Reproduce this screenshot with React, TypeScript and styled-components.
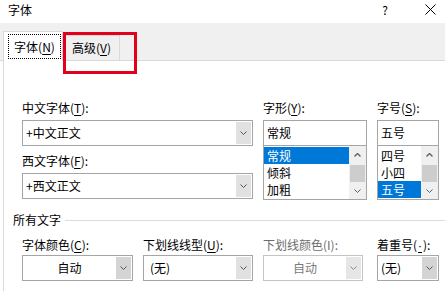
import React from 'react';
import styled, { createGlobalStyle } from 'styled-components';

const GlobalStyle = createGlobalStyle`
  html, body {
    margin: 0;
    padding: 0;
    background: #ffffff;
  }
  body {
    width: 445px;
    height: 291px;
    overflow: hidden;
    font-family: "Noto Sans CJK SC", "Microsoft YaHei UI", sans-serif;
    font-size: 12px;
    color: #000000;
  }
  u {
    text-decoration-thickness: 1px;
    text-underline-offset: 2px;
  }
`;

const Dialog = styled.div`
  width: 445px;
  height: 291px;
  display: flex;
  flex-direction: column;
  background: #ffffff;
  overflow: hidden;
`;

const TitleBar = styled.div`
  height: 23px;
  flex: none;
  box-sizing: border-box;
  padding: 0 0 3px 8px;
  display: flex;
  align-items: center;
`;

const TitleText = styled.div`
  flex: 1;
  line-height: 16px;
`;

const HelpGlyph = styled.div`
  line-height: 16px;
  margin-right: 37px;
`;

const CloseGlyph = styled.svg`
  width: 11px;
  height: 11px;
  margin-right: 9px;
  margin-top: -2px;
`;

const TabStrip = styled.div`
  height: 38px;
  flex: none;
  box-sizing: border-box;
  background: #f0f0f0;
  border-bottom: 1px solid #d9d9d9;
  padding-left: 3px;
  display: flex;
  align-items: flex-end;
`;

const ActiveTab = styled.div`
  width: 60px;
  height: 30px;
  margin-bottom: -1px;
  box-sizing: border-box;
  background: #ffffff;
  border: 1px solid #d9d9d9;
  border-bottom: none;
  position: relative;
  z-index: 1;
  padding: 2px 0 0 4px;
`;

const FocusRing = styled.div`
  width: 53px;
  height: 25px;
  box-sizing: border-box;
  border: 1px dotted #000000;
  display: flex;
  align-items: center;
  justify-content: center;
  line-height: 16px;
`;

const Tab = styled.div`
  width: 57px;
  height: 25px;
  box-sizing: border-box;
  background: #f0f0f0;
  border-top: 1px solid #d9d9d9;
  border-right: 1px solid #d9d9d9;
  padding: 2px 0 0 9px;
  line-height: 20px;
  position: relative;
`;

const RedMark = styled.div`
  position: absolute;
  left: 0;
  top: -4px;
  width: 74px;
  height: 42px;
  box-sizing: border-box;
  border: 3px solid #e3001b;
  pointer-events: none;
  z-index: 2;
`;

const Panel = styled.div`
  flex: 1;
  margin-left: 3px;
  border-left: 1px solid #d9d9d9;
  box-sizing: border-box;
  padding: 39px 0 0 9px;
  display: flex;
  flex-direction: column;
`;

const TopRow = styled.div`
  margin-left: 9px;
  display: flex;
  gap: 10px;
`;

const Column = styled.div<{ $width: number; $gap?: number }>`
  width: ${(p) => p.$width}px;
  display: flex;
  flex-direction: column;
  gap: ${(p) => p.$gap ?? 0}px;
`;

const Field = styled.div<{ $width?: number; $gap?: number; $offset?: number }>`
  width: ${(p) => (p.$width ? `${p.$width}px` : 'auto')};
  margin-left: ${(p) => p.$offset ?? 0}px;
  display: flex;
  flex-direction: column;
  gap: ${(p) => p.$gap ?? 4}px;
`;

const Label = styled.div<{ $disabled?: boolean }>`
  height: 16px;
  line-height: 16px;
  white-space: nowrap;
  color: ${(p) => (p.$disabled ? '#6d6d6d' : '#000000')};
`;

const Dot = styled.u`
  font-family: "Liberation Sans", Arial, sans-serif;
  padding: 0 1px;
`;

const ComboBox = styled.div<{ $disabled?: boolean }>`
  height: 26px;
  box-sizing: border-box;
  border: 1px solid ${(p) => (p.$disabled ? '#c4c4c4' : '#a5a5a5')};
  background: #ffffff;
  display: flex;
`;

const ComboValue = styled.div<{ $align?: 'left' | 'center'; $pad?: number; $disabled?: boolean }>`
  flex: 1;
  line-height: 24px;
  padding-left: ${(p) => p.$pad ?? 3}px;
  text-align: ${(p) => p.$align ?? 'left'};
  color: ${(p) => (p.$disabled ? '#7a7a7a' : '#000000')};
  white-space: nowrap;
`;

const DropButton = styled.div<{ $shade?: string }>`
  width: 15px;
  margin: 1px 1px 1px 0;
  background: ${(p) => p.$shade ?? '#e1e1e1'};
  display: flex;
  align-items: center;
  justify-content: center;
`;

const TextBox = styled.div`
  height: 26px;
  box-sizing: border-box;
  border: 1px solid #a5a5a5;
  padding-left: 3px;
  line-height: 24px;
`;

const ListBox = styled.div`
  height: 55px;
  margin-top: -1px;
  box-sizing: border-box;
  border: 1px solid #a5a5a5;
  display: flex;
`;

const ListItems = styled.div`
  flex: 1;
  padding-top: 1px;
`;

const ListItem = styled.div<{ $selected?: boolean }>`
  height: 17px;
  line-height: 17px;
  padding-left: 3px;
  background: ${(p) => (p.$selected ? '#0078d7' : 'transparent')};
  color: ${(p) => (p.$selected ? '#ffffff' : '#000000')};
`;

const ScrollBar = styled.div`
  width: 17px;
  background: #f0f0f0;
  display: flex;
  flex-direction: column;
`;

const ScrollArrow = styled.div`
  height: 17px;
  display: flex;
  align-items: center;
  justify-content: center;
`;

const ScrollTrack = styled.div`
  flex: 1;
  padding: 2px 1px 0 1px;
`;

const ScrollThumb = styled.div`
  height: 17px;
  background: #cdcdcd;
`;

const SectionHeader = styled.div`
  margin-top: 12px;
  height: 16px;
  display: flex;
  align-items: center;
  gap: 4px;
`;

const SectionTitle = styled.div`
  line-height: 16px;
  white-space: nowrap;
`;

const SectionRule = styled.div`
  flex: 1;
  height: 1px;
  background: #dcdcdc;
`;

const BottomRow = styled.div`
  margin: 9px 0 0 9px;
  display: flex;
  gap: 10px;
`;

const Chevron = ({ up, color = '#555555', size = 7 }: { up?: boolean; color?: string; size?: number }) => (
  <svg width={size} height={4} viewBox="0 0 7 4">
    <polyline
      points={up ? '0.5,3.5 3.5,0.5 6.5,3.5' : '0.5,0.5 3.5,3.5 6.5,0.5'}
      fill="none"
      stroke={color}
      strokeWidth={up ? 1.4 : 1}
    />
  </svg>
);

interface IComboProps {
  value: string;
  align?: 'left' | 'center';
  pad?: number;
  shade?: string;
  disabled?: boolean;
}

const Combo = ({ value, align, pad, shade, disabled }: IComboProps) => (
  <ComboBox $disabled={disabled}>
    <ComboValue $align={align} $pad={pad} $disabled={disabled}>
      {value}
    </ComboValue>
    <DropButton $shade={shade}>
      <Chevron color={disabled ? '#8a8a8a' : '#555555'} />
    </DropButton>
  </ComboBox>
);

const List = ({ items, selected }: { items: string[]; selected: number }) => (
  <ListBox>
    <ListItems>
      {items.map((item, i) => (
        <ListItem key={item} $selected={i === selected}>
          {item}
        </ListItem>
      ))}
    </ListItems>
    <ScrollBar>
      <ScrollArrow>
        <Chevron up color="#606060" />
      </ScrollArrow>
      <ScrollTrack>
        <ScrollThumb />
      </ScrollTrack>
      <ScrollArrow>
        <Chevron color="#606060" />
      </ScrollArrow>
    </ScrollBar>
  </ListBox>
);

export default function App() {
  return (
    <>
      <GlobalStyle />
      <Dialog>
        <TitleBar>
          <TitleText>字体</TitleText>
          <HelpGlyph>?</HelpGlyph>
          <CloseGlyph viewBox="0 0 11 11">
            <line x1="0.5" y1="0.5" x2="10.5" y2="10.5" stroke="#000" strokeWidth="1" />
            <line x1="10.5" y1="0.5" x2="0.5" y2="10.5" stroke="#000" strokeWidth="1" />
          </CloseGlyph>
        </TitleBar>

        <TabStrip>
          <ActiveTab>
            <FocusRing>
              字体(<u>N</u>)
            </FocusRing>
          </ActiveTab>
          <Tab>
            高级(<u>V</u>)
            <RedMark />
          </Tab>
        </TabStrip>

        <Panel>
          <TopRow>
            <Column $width={231} $gap={7}>
              <Field>
                <Label>
                  中文字体(<u>T</u>):
                </Label>
                <Combo value="+中文正文" />
              </Field>
              <Field>
                <Label>
                  西文字体(<u>F</u>):
                </Label>
                <Combo value="+西文正文" />
              </Field>
            </Column>
            <Column $width={104}>
              <Field>
                <Label>
                  字形(<u>Y</u>):
                </Label>
                <TextBox>常规</TextBox>
              </Field>
              <List items={['常规', '倾斜', '加粗']} selected={0} />
            </Column>
            <Column $width={62}>
              <Field>
                <Label>
                  字号(<u>S</u>):
                </Label>
                <TextBox>五号</TextBox>
              </Field>
              <List items={['四号', '小四', '五号']} selected={2} />
            </Column>
          </TopRow>

          <SectionHeader>
            <SectionTitle>所有文字</SectionTitle>
            <SectionRule />
          </SectionHeader>

          <BottomRow>
            <Field $width={111} $gap={2}>
              <Label>
                字体颜色(<u>C</u>):
              </Label>
              <Combo value="自动" align="center" pad={0} shade="#d4d4d4" />
            </Field>
            <Field $width={110} $gap={2}>
              <Label>
                下划线线型(<u>U</u>):
              </Label>
              <Combo value="(无)" pad={6} />
            </Field>
            <Field $width={100} $gap={2}>
              <Label $disabled>下划线颜色(I):</Label>
              <Combo value="自动" align="center" pad={0} disabled shade="#e6e6e6" />
            </Field>
            <Field $width={62} $gap={2} $offset={4}>
              <Label>
                着重号(<Dot>·</Dot>):
              </Label>
              <Combo value="(无)" pad={3} shade="#d4d4d4" />
            </Field>
          </BottomRow>
        </Panel>
      </Dialog>
    </>
  );
}
